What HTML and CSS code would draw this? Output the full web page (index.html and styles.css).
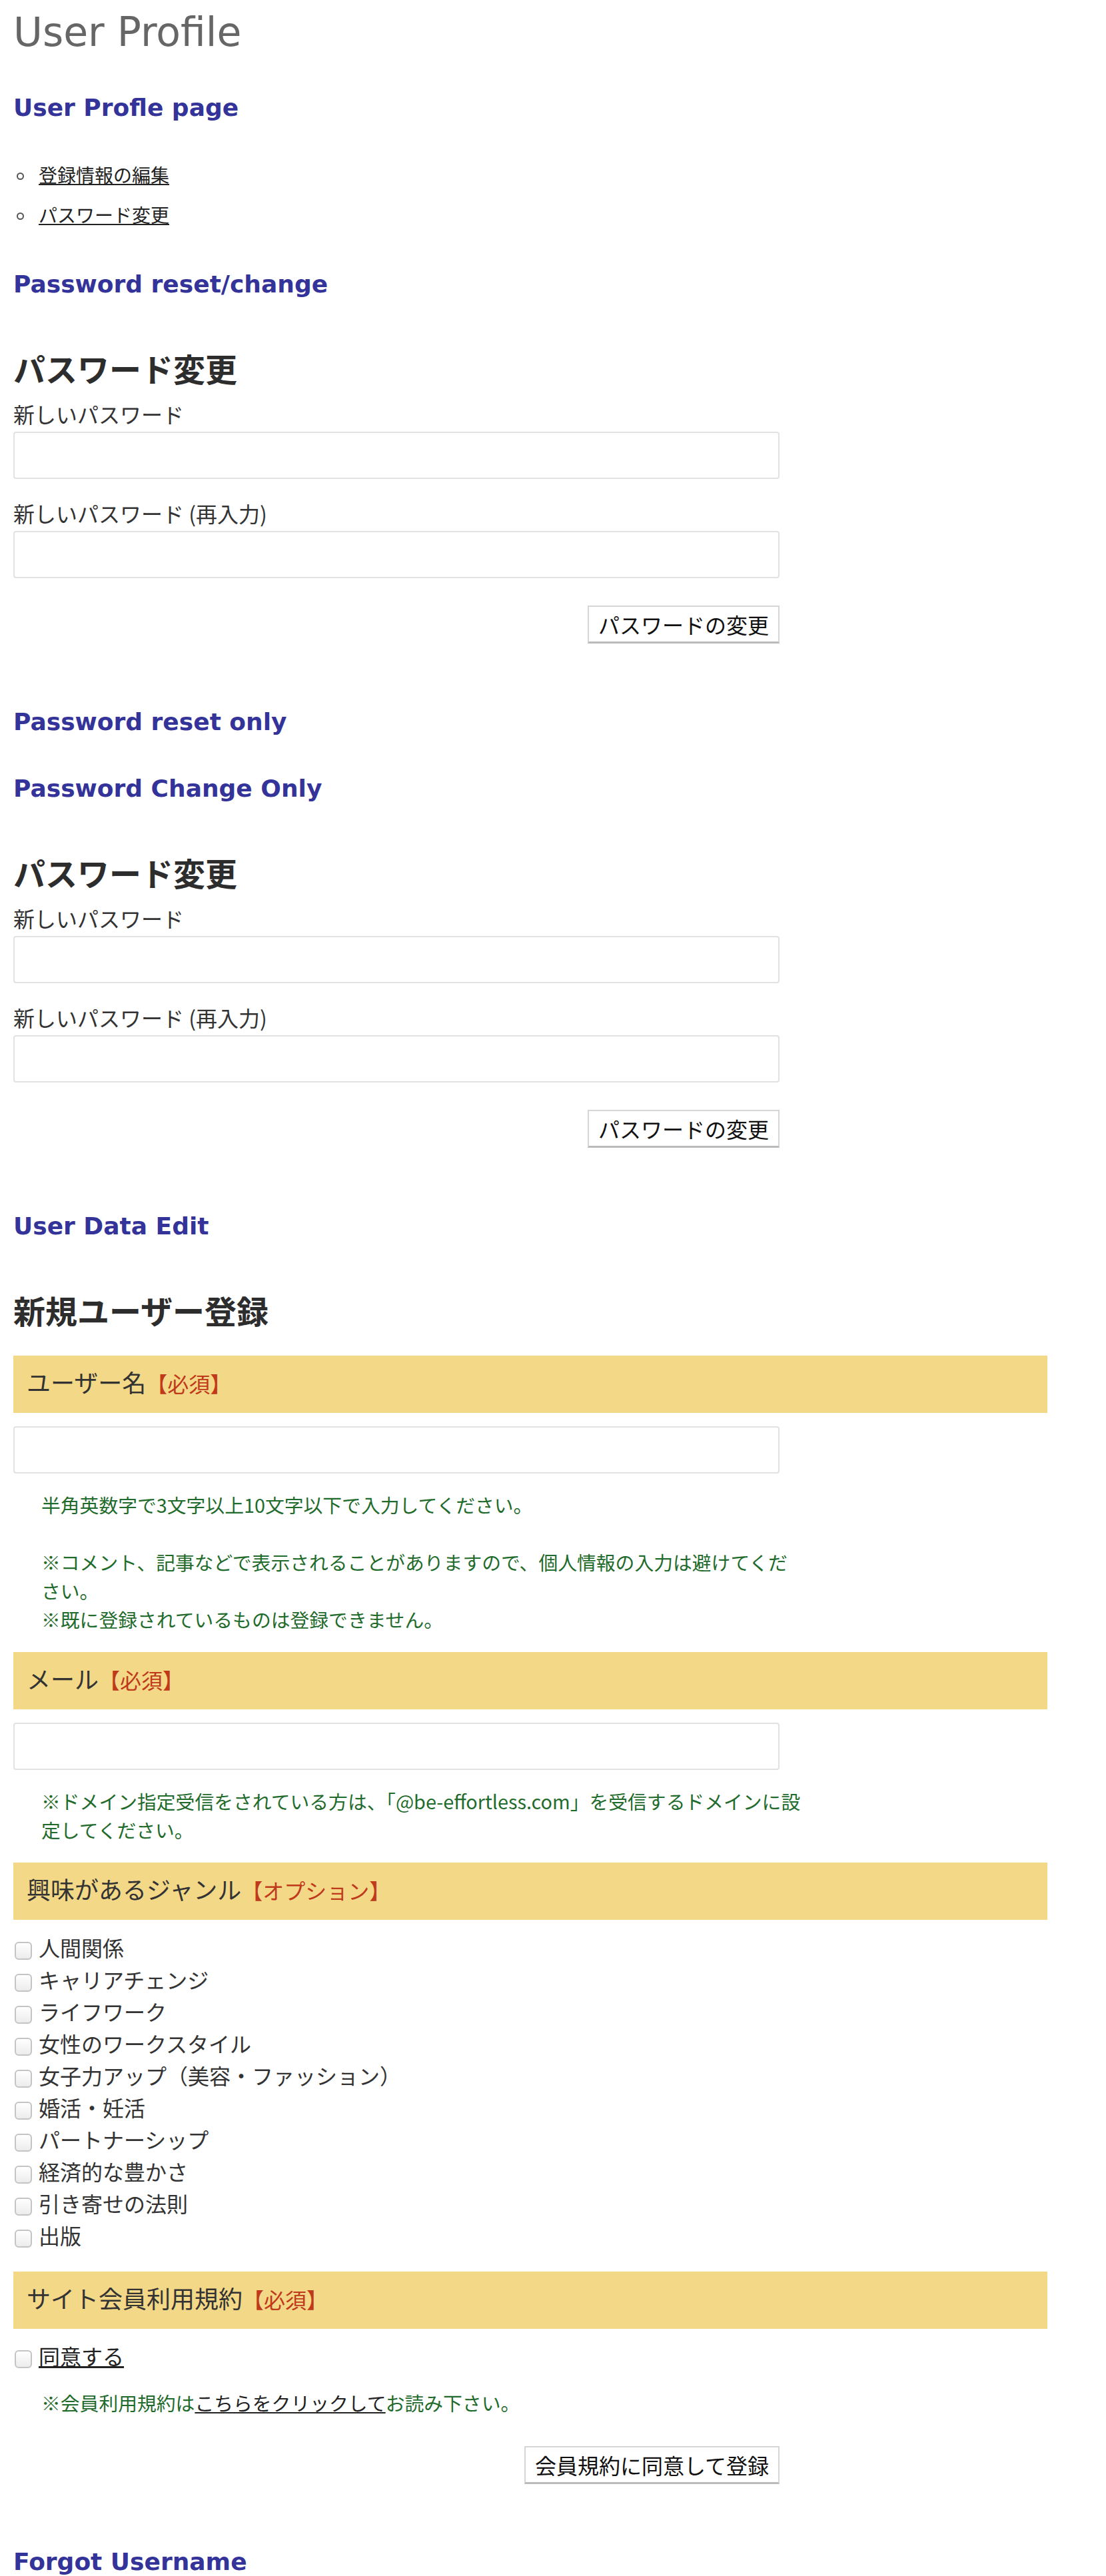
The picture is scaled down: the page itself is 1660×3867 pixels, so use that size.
FILE: index.html
```html
<!DOCTYPE html>
<html lang="ja">
<head>
    <meta charset="UTF-8">
    <title>User Profile</title>
    <link rel="stylesheet" href="styles.css">
</head>
<body>
<div class="page">
    <h1 class="page-title">User Profile</h1>

    <h3 class="sec-title">User Profle page</h3>
    <ul class="menu">
        <li><a href="#">登録情報の編集</a></li>
        <li><a href="#">パスワード変更</a></li>
    </ul>

    <h3 class="sec-title">Password reset/change</h3>
    <form class="pw-form">
        <h2 class="form-title">パスワード変更</h2>
        <label class="field-label">新しいパスワード</label>
        <input type="password" class="text-input">
        <label class="field-label">新しいパスワード (再入力)</label>
        <input type="password" class="text-input">
        <div class="form-actions"><button type="button" class="btn">パスワードの変更</button></div>
    </form>

    <h3 class="sec-title">Password reset only</h3>
    <h3 class="sec-title">Password Change Only</h3>
    <form class="pw-form">
        <h2 class="form-title">パスワード変更</h2>
        <label class="field-label">新しいパスワード</label>
        <input type="password" class="text-input">
        <label class="field-label">新しいパスワード (再入力)</label>
        <input type="password" class="text-input">
        <div class="form-actions"><button type="button" class="btn">パスワードの変更</button></div>
    </form>

    <h3 class="sec-title">User Data Edit</h3>
    <form class="reg-form">
        <h2 class="form-title">新規ユーザー登録</h2>

        <div class="field-head">ユーザー名<span class="req">【必須】</span></div>
        <input type="text" class="text-input">
        <p class="note">半角英数字で3文字以上10文字以下で入力してください。<br><br>※コメント、記事などで表示されることがありますので、個人情報の入力は避けてください。<br>※既に登録されているものは登録できません。</p>

        <div class="field-head">メール<span class="req">【必須】</span></div>
        <input type="text" class="text-input">
        <p class="note">※ドメイン指定受信をされている方は、「@be-effortless.com」を受信するドメインに設定してください。</p>

        <div class="field-head">興味があるジャンル<span class="req">【オプション】</span></div>
        <div class="checks">
            <label class="check"><input type="checkbox">人間関係</label>
            <label class="check"><input type="checkbox">キャリアチェンジ</label>
            <label class="check"><input type="checkbox">ライフワーク</label>
            <label class="check"><input type="checkbox">女性のワークスタイル</label>
            <label class="check"><input type="checkbox">女子力アップ（美容・ファッション）</label>
            <label class="check"><input type="checkbox">婚活・妊活</label>
            <label class="check"><input type="checkbox">パートナーシップ</label>
            <label class="check"><input type="checkbox">経済的な豊かさ</label>
            <label class="check"><input type="checkbox">引き寄せの法則</label>
            <label class="check"><input type="checkbox">出版</label>
        </div>

        <div class="field-head">サイト会員利用規約<span class="req">【必須】</span></div>
        <label class="check agree"><input type="checkbox"><u>同意する</u></label>
        <p class="note">※会員利用規約は<a href="#">こちらをクリックして</a>お読み下さい。</p>

        <div class="form-actions"><button type="button" class="btn">会員規約に同意して登録</button></div>
    </form>

    <h3 class="sec-title">Forgot Username</h3>
</div>
</body>
</html>
```

FILE: styles.css
```css
body {
    margin: 0;
    background-color: #fff;
    font-family: "Noto Sans CJK JP", sans-serif;
    color: #333;
}
.page {
    padding: 13px 20px 0;
}
.page-title {
    margin: 0;
    font-family: "DejaVu Sans", sans-serif;
    font-size: 60px;
    line-height: 70px;
    font-weight: normal;
    color: #666;
}
.sec-title {
    margin: 58px 0;
    font-family: "DejaVu Sans", sans-serif;
    font-size: 36px;
    line-height: 42px;
    font-weight: bold;
    color: #333399;
}
.sec-title:last-child {
    margin-bottom: 0;
}
.menu {
    list-style: none;
    margin: 58px 0 63px;
    padding: 0;
    font-size: 28px;
    line-height: 42px;
}
.menu li {
    display: flex;
    align-items: center;
    margin-bottom: 18px;
}
.menu li:last-child {
    margin-bottom: 0;
}
.menu li::before {
    content: "";
    box-sizing: border-box;
    width: 11px;
    height: 11px;
    border: 2px solid #555;
    border-radius: 50%;
    margin: 4px 22px 0 5px;
}
.menu a {
    color: #222;
    text-decoration: underline;
}
.pw-form {
    width: 1150px;
    margin: 75px 0 97px;
}
.reg-form {
    margin: 75px 0 96px;
}
.form-title {
    margin: 0 0 20px;
    font-size: 48px;
    line-height: 58px;
    font-weight: bold;
    color: #2d2d2d;
}
.reg-form .form-title {
    margin-bottom: 40px;
}
.field-label {
    display: block;
    font-size: 32px;
    line-height: 40px;
    margin-bottom: 7px;
}
.text-input {
    display: block;
    box-sizing: border-box;
    width: 1150px;
    height: 71px;
    margin: 0 0 31px;
    border: 2px solid #e2e2e2;
    border-radius: 4px;
    background-color: #fff;
}
.reg-form .text-input {
    margin: 20px 0 25px;
}
.form-actions {
    display: flex;
    justify-content: flex-end;
    width: 1150px;
    margin-top: 41px;
}
.reg-form .form-actions {
    margin-top: 44px;
}
.btn {
    height: 57px;
    padding: 0 14px;
    font-family: "Noto Sans CJK JP", sans-serif;
    font-size: 32px;
    color: #111;
    background-color: #fff;
    border: 2px solid #d6d6d6;
    border-bottom: 3px solid #bbb;
    border-radius: 0;
}
.field-head {
    box-sizing: border-box;
    width: 1552px;
    margin: 0;
    padding: 13px 20px 21px;
    background-color: #f3d887;
    font-size: 36px;
    line-height: 52px;
    color: #333;
}
.req {
    font-size: 32px;
    line-height: 1;
    color: #c0391b;
}
.note {
    width: 1146px;
    margin: 25px 0 28px 42px;
    font-size: 28.8px;
    line-height: 43px;
    color: #1f6b2c;
}
.note a {
    color: #222;
    text-decoration: underline;
}
.checks {
    margin: 17px 0 31px;
}
.check {
    display: flex;
    align-items: center;
    height: 48px;
    font-size: 32px;
    line-height: 48px;
    color: #333;
}
.check input {
    appearance: none;
    -webkit-appearance: none;
    box-sizing: border-box;
    width: 26px;
    height: 27px;
    margin: 10px 10px 0 2px;
    border: 2px solid #c4c4c4;
    border-radius: 6px;
    background: linear-gradient(#fff, #ececec);
}
.agree {
    margin-top: 16px;
}
.agree u {
    color: #222;
}
```
